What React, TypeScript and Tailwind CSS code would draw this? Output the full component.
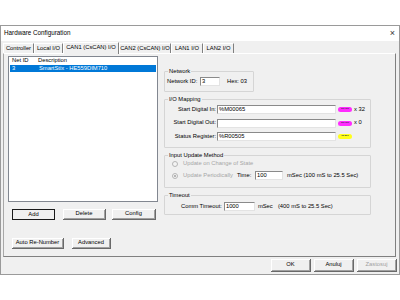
import React from "react";

function Btn({ w, children, def, disabled }: { w: string; children: React.ReactNode; def?: boolean; disabled?: boolean }) {
  return (
    <div
      className={`${w} h-full flex items-center justify-center bg-[#f0f0f0] ${
        def ? "border border-[#1a1a1a]" : "border-r border-b border-[#696969] shadow-[inset_1px_1px_#ffffff,inset_-1px_-1px_#a0a0a0]"
      } ${disabled ? "text-[#a0a0a0]" : "text-black"}`}
    >
      {children}
    </div>
  );
}

function Input({ w, children }: { w: string; children?: React.ReactNode }) {
  return (
    <div className={`${w} shrink-0 h-[9px] bg-white border-t border-l border-[#8a8a8a] border-r border-b border-r-[#e3e3e3] border-b-[#e3e3e3] flex items-center pl-[1px] leading-none`}>
      {children}
    </div>
  );
}

function Group({ label, h, mt, children }: { label: string; h: string; mt: string; children: React.ReactNode }) {
  return (
    <fieldset className={`${h} ${mt} border border-[#d5d5d5] px-0 pb-0 rounded-[1px]`}>
      <legend className="ml-[3px] px-[1px] leading-[8px] text-black">{label}</legend>
      {children}
    </fieldset>
  );
}

function Pill({ color, text }: { color: string; text: string }) {
  return (
    <div className={`w-[14px] h-[5px] rounded-full ${color} flex items-center justify-center text-[2.5px] leading-none font-bold text-[#333]`}>
      {text}
    </div>
  );
}

function Radio({ checked }: { checked?: boolean }) {
  return (
    <div className="w-[6px] h-[6px] rounded-full border border-[#b5b5b5] bg-[#f4f4f4] flex items-center justify-center">
      {checked && <div className="w-[2px] h-[2px] rounded-full bg-[#a0a0a0]" />}
    </div>
  );
}

export default function App() {
  const tabs = [
    { t: "Controller", w: "w-[31px]" },
    { t: "Local I/O", w: "w-[29px]" },
    { t: "CAN1 (CsCAN) I/O", w: "w-[56px]", sel: true },
    { t: "CAN2 (CsCAN) I/O", w: "w-[52px]" },
    { t: "LAN1 I/O", w: "w-[32px]" },
    { t: "LAN2 I/O", w: "w-[31px]" },
  ];
  return (
    <div className="w-[400px] h-[300px] bg-white pt-[25px] font-['Liberation_Sans',Arial,sans-serif] text-[5.8px] leading-none text-black whitespace-nowrap">
      <div className="w-[400px] h-[250px] border border-[#9a9a9a] flex flex-col">
        {/* title bar */}
        <div className="h-[15px] bg-white flex items-center justify-between pl-[3px] pr-[4px]">
          <span className="text-[6.3px]">Hardware Configuration</span>
          <span className="text-[9px] text-[#333] font-light">×</span>
        </div>
        {/* body */}
        <div className="flex-1 bg-[#f0f0f0] flex flex-col">
          {/* tabs */}
          <div className="h-[12px] flex items-end pl-[2px]">
            {tabs.map((tb) => (
              <div
                key={tb.t}
                className={`${tb.w} ${tb.sel ? "h-[12px] relative z-10 -mb-[1px] bg-[#f0f0f0] pb-[2px]" : "h-[10px]"} flex items-center justify-center border-t border-l border-white border-r border-r-[#808080]`}
              >
                {tb.t}
              </div>
            ))}
          </div>
          {/* panel */}
          <div className="ml-[2px] w-[393px] h-[204px] border border-[#a8a8a8] border-t-white border-r-[#808080] border-b-[#808080] flex pl-[4px] pt-[2px]">
            {/* left column */}
            <div className="w-[150px] flex flex-col">
              <div className="h-[146px] bg-white border border-[#828790] pl-[1px] pr-[1px]">
                <div className="h-[8px] flex items-center">
                  <span className="w-[28px] pl-[2px]">Net ID</span>
                  <span>Description</span>
                </div>
                <div className="h-[7px] bg-[#0078d7] text-white flex items-center">
                  <span className="w-[29px] pl-[2px]">3</span>
                  <span>SmartStix - HE559DIM710</span>
                </div>
              </div>
              <div className="h-[11px] mt-[7px] flex">
                <div className="ml-[4px]"><Btn w="w-[43px]" def>Add</Btn></div>
                <div className="ml-[8px]"><Btn w="w-[43px]">Delete</Btn></div>
                <div className="ml-[6px]"><Btn w="w-[44px]">Config</Btn></div>
              </div>
              <div className="h-[11px] mt-[18px] flex">
                <div className="ml-[4px]"><Btn w="w-[52px]">Auto Re-Number</Btn></div>
                <div className="ml-[8px]"><Btn w="w-[39px]">Advanced</Btn></div>
              </div>
            </div>
            {/* right column */}
            <div className="ml-[6px] w-[207px] flex flex-col">
              <div className="w-[90px]">
                <Group label="Network" h="h-[25px]" mt="mt-[11px]">
                  <div className="flex items-center mt-[2px] pl-[2px] h-[9px]">
                    <span className="w-[33px]">Network ID:</span>
                    <Input w="w-[20px]">3</Input>
                    <span className="ml-[7px]">Hex: 03</span>
                  </div>
                </Group>
              </div>
              <Group label="I/O Mapping" h="h-[53px]" mt="mt-[3px]">
                <div className="flex flex-col gap-[4.5px] mt-[2px]">
                  <div className="flex items-center h-[9px]">
                    <span className="w-[52px] text-right pr-[1px]">Start Digital In:</span>
                    <Input w="w-[119px]">%M00065</Input>
                    <div className="ml-[2px]"><Pill color="bg-[#ff2bff]" text="START" /></div>
                    <span className="ml-[2px]">x 32</span>
                  </div>
                  <div className="flex items-center h-[9px]">
                    <span className="w-[52px] text-right pr-[1px]">Start Digital Out:</span>
                    <Input w="w-[119px]" />
                    <div className="ml-[2px]"><Pill color="bg-[#ff2bff]" text="START" /></div>
                    <span className="ml-[2px]">x 0</span>
                  </div>
                  <div className="flex items-center h-[9px]">
                    <span className="w-[52px] text-right pr-[1px]">Status Register:</span>
                    <Input w="w-[119px]">%R00505</Input>
                    <div className="ml-[2px]"><Pill color="bg-[#ffff1a]" text="16-BIT" /></div>
                  </div>
                </div>
              </Group>
              <Group label="Input Update Method" h="h-[37px]" mt="mt-[3px]">
                <div className="flex items-center h-[9px] pl-[7px] text-[#a6a6a6]">
                  <Radio />
                  <span className="ml-[5px]">Update on Change of State</span>
                </div>
                <div className="flex items-center h-[9px] mt-[3px] pl-[7px] text-[#a6a6a6]">
                  <Radio checked />
                  <span className="ml-[5px] w-[54px]">Update Periodically</span>
                  <span className="text-black w-[18px]">Time:</span>
                  <Input w="w-[28px]"><span className="text-black">100</span></Input>
                  <span className="ml-[4px] text-black">mSec (100 mS to 25.5 Sec)</span>
                </div>
              </Group>
              <Group label="Timeout" h="h-[24px]" mt="mt-[3px]">
                <div className="flex items-center h-[9px] mt-[3px] pl-[16px]">
                  <span>Comm Timeout:</span>
                  <Input w="w-[31px] ml-[2px]">1000</Input>
                  <span className="ml-[3px] w-[20px]">mSec</span>
                  <span>(400 mS to 25.5 Sec)</span>
                </div>
              </Group>
            </div>
          </div>
          {/* bottom buttons */}
          <div className="h-[13px] mt-[2px] flex justify-end gap-[3px] pr-[2px]">
            <Btn w="w-[40px]">OK</Btn>
            <Btn w="w-[40px]">Anuluj</Btn>
            <Btn w="w-[40px]" disabled>Zastosuj</Btn>
          </div>
        </div>
      </div>
    </div>
  );
}
